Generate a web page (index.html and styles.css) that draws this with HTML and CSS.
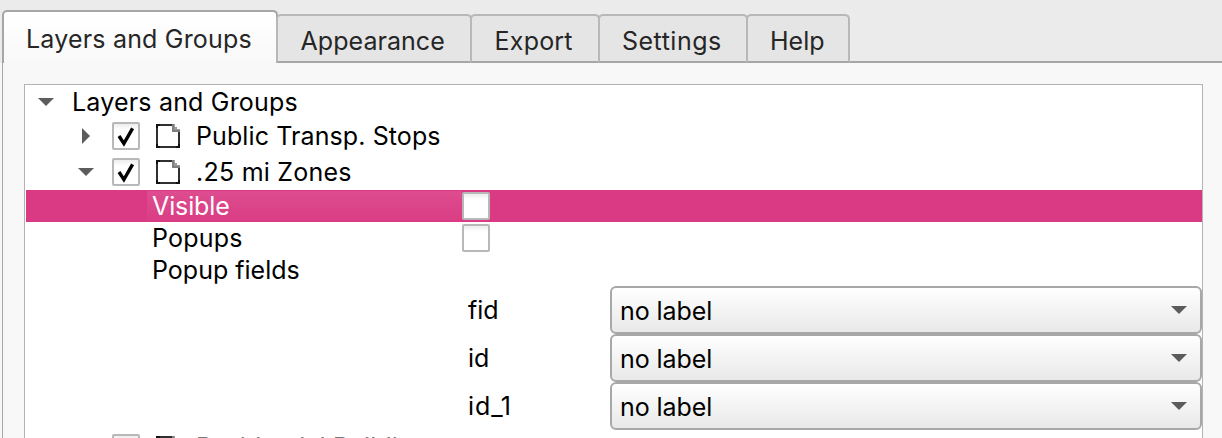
FILE: index.html
```
<!DOCTYPE html>
<html lang="en">
<head>
<meta charset="utf-8">
<title>Layers and Groups</title>
<link rel="stylesheet" href="styles.css">
</head>
<body>
<svg class="defs" aria-hidden="true">
  <symbol id="down" viewBox="0 0 16 8"><path d="M0 0H16L8 8Z" fill="#5c5c5c"/></symbol>
  <symbol id="right" viewBox="0 0 8 16"><path d="M0 0L8 8L0 16Z" fill="#5c5c5c"/></symbol>
  <symbol id="check" viewBox="0 0 24 24"><path d="M5 12L9.9 19.6L18.6 4.4" fill="none" stroke="#000" stroke-width="3.4"/></symbol>
  <symbol id="page" viewBox="0 0 24 24">
    <path d="M16 1H1V23H23V8" fill="none" stroke="#303030" stroke-width="2"/>
    <path d="M16 0H19V3H21V5H24V8H16Z" fill="#999"/>
    <path d="M17 0V7H24" fill="none" stroke="#777" stroke-width="1.5"/>
    <path d="M0 0H4V2H2V4H0ZM0 20H2V22H4V24H0ZM20 22H22V20H24V24H20Z" fill="#111"/>
  </symbol>
</svg>
<nav class="tabs">
  <div class="tab active"><span class="t-title">Layers and Groups</span></div>
  <div class="tab appearance"><span>Appearance</span></div>
  <div class="tab export"><span>Export</span></div>
  <div class="tab settings"><span>Settings</span></div>
  <div class="tab help"><span>Help</span></div>
</nav>
<main class="pane">
  <div class="tree">
    <div class="row root"><svg class="down"><use href="#down"/></svg><span class="t-title">Layers and Groups</span></div>
    <div class="row layer"><svg class="right"><use href="#right"/></svg><i class="box"><svg><use href="#check"/></svg></i><svg class="page"><use href="#page"/></svg><span class="t-stops">Public Transp. Stops</span></div>
    <div class="row layer"><svg class="down"><use href="#down"/></svg><i class="box"><svg><use href="#check"/></svg></i><svg class="page"><use href="#page"/></svg><span class="t-zones">.25 mi Zones</span></div>
    <div class="row prop selected"><div class="name"><span class="t-visible">Visible</span></div><i class="box"></i></div>
    <div class="row prop"><div class="name"><span class="t-popups">Popups</span></div><i class="box"></i></div>
    <div class="row prop"><div class="name"><span>Popup fields</span></div></div>
    <div class="row field"><span>fid</span><div class="combo"><span>no label</span><svg class="down"><use href="#down"/></svg></div></div>
    <div class="row field"><span>id</span><div class="combo"><span>no label</span><svg class="down"><use href="#down"/></svg></div></div>
    <div class="row field"><span class="t-id1">id_1</span><div class="combo"><span>no label</span><svg class="down"><use href="#down"/></svg></div></div>
    <div class="row layer"><svg class="right"><use href="#right"/></svg><i class="box"></i><svg class="page"><use href="#page"/></svg><span class="t-res">Residential Buildings</span></div>
  </div>
</main>
</body>
</html>
```
FILE: styles.css
```
* { box-sizing: border-box; }
html { height: 438px; overflow: hidden; }
body {
  margin: 0;
  height: 438px;
  overflow: hidden;
  background: #ebebeb;
  color: #000;
  font: 25px/32px Inter, "Liberation Sans", sans-serif;
  white-space: nowrap;
}
.defs { display: none; }
svg { flex: none; display: block; }

/* Tab bar */
.tabs {
  display: flex;
  align-items: flex-end;
  height: 63px;
  margin-left: 2px;
  background: linear-gradient(#a6a6a6, #a6a6a6) 0 100% / 100% 2px no-repeat;
  color: #262626;
}
.tab {
  height: 49px;
  padding: 9px 0 0 22px;
  border: 2px solid #b8b8b8;
  border-bottom-color: #a6a6a6;
  border-radius: 5px 5px 0 0;
  background: #e5e5e5;
  margin-left: -2px;
}
.tab.active {
  width: 276px;
  height: 53px;
  margin-left: 0;
  padding-top: 11px;
  border-color: #a6a6a6;
  border-bottom: 0;
  background: linear-gradient(#fff, #f8f8f8);
}
.appearance { width: 196px; padding-left: 22.5px; letter-spacing: 0.05px; }
.export { width: 130px; padding-left: 22.6px; letter-spacing: 0.2px; }
.settings { width: 150px; letter-spacing: 0.5px; }
.help { width: 104px; }

/* Tree */
.pane {
  height: 375px;
  padding: 21px 19px 0 21px;
  border-left: 3px solid #a6a6a6;
  border-image: linear-gradient(90deg, #f8f8f8 2px, #a6a6a6 2px) 0 0 0 3;
  background: #f8f8f8;
}
.tree {
  height: 354px;
  overflow: hidden;
  padding: 1px 0 0 1px;
  border: 1px solid #b3b3b3;
  border-bottom: 0;
  background: #fff;
}
.row { display: flex; align-items: center; height: 32px; }
.down { width: 16px; height: 8px; }
.right { width: 8px; height: 16px; margin: 0 4px; }
.page { width: 24px; height: 24px; margin: 0 16px; }
.root { padding-left: 12px; gap: 18px; }
.layer { height: 36px; padding-left: 52px; }
.layer .box { margin-left: 18px; }
.box {
  flex: none;
  width: 28px;
  height: 28px;
  border: 2px solid #b8b8b8;
  border-radius: 2px;
  background: linear-gradient(#ededed, #fff 6px);
}
.box svg { width: 24px; height: 24px; }
.prop { padding-left: 121px; }
.name { width: 315px; height: 30px; padding-left: 5px; line-height: 30px; }
.selected { background: #da3a83; color: #fff; }
.selected .name { background: linear-gradient(#de4c90, #da3d84); }
.field { height: 48px; padding-left: 442px; }
.field > span { width: 142px; }
.combo {
  display: flex;
  align-items: center;
  justify-content: space-between;
  width: 592px;
  height: 48px;
  padding: 2px 13px 0 8px;
  border: 2px solid #a8a8a8;
  border-radius: 6px;
  background: linear-gradient(#fff, #e9e9e9);
  letter-spacing: -0.08px;
}
.combo .down { margin-bottom: 2px; }

/* Optical tracking */
.t-title { letter-spacing: 0.19px; }
.t-stops { letter-spacing: 0.1px; }
.t-zones { letter-spacing: 0.24px; }
.t-visible { letter-spacing: -0.12px; }
.t-popups { letter-spacing: 0.2px; }
.t-id1 { letter-spacing: 0.9px; }
.t-res { margin-top: -2px; letter-spacing: 0.1px; color: #777; }
```
